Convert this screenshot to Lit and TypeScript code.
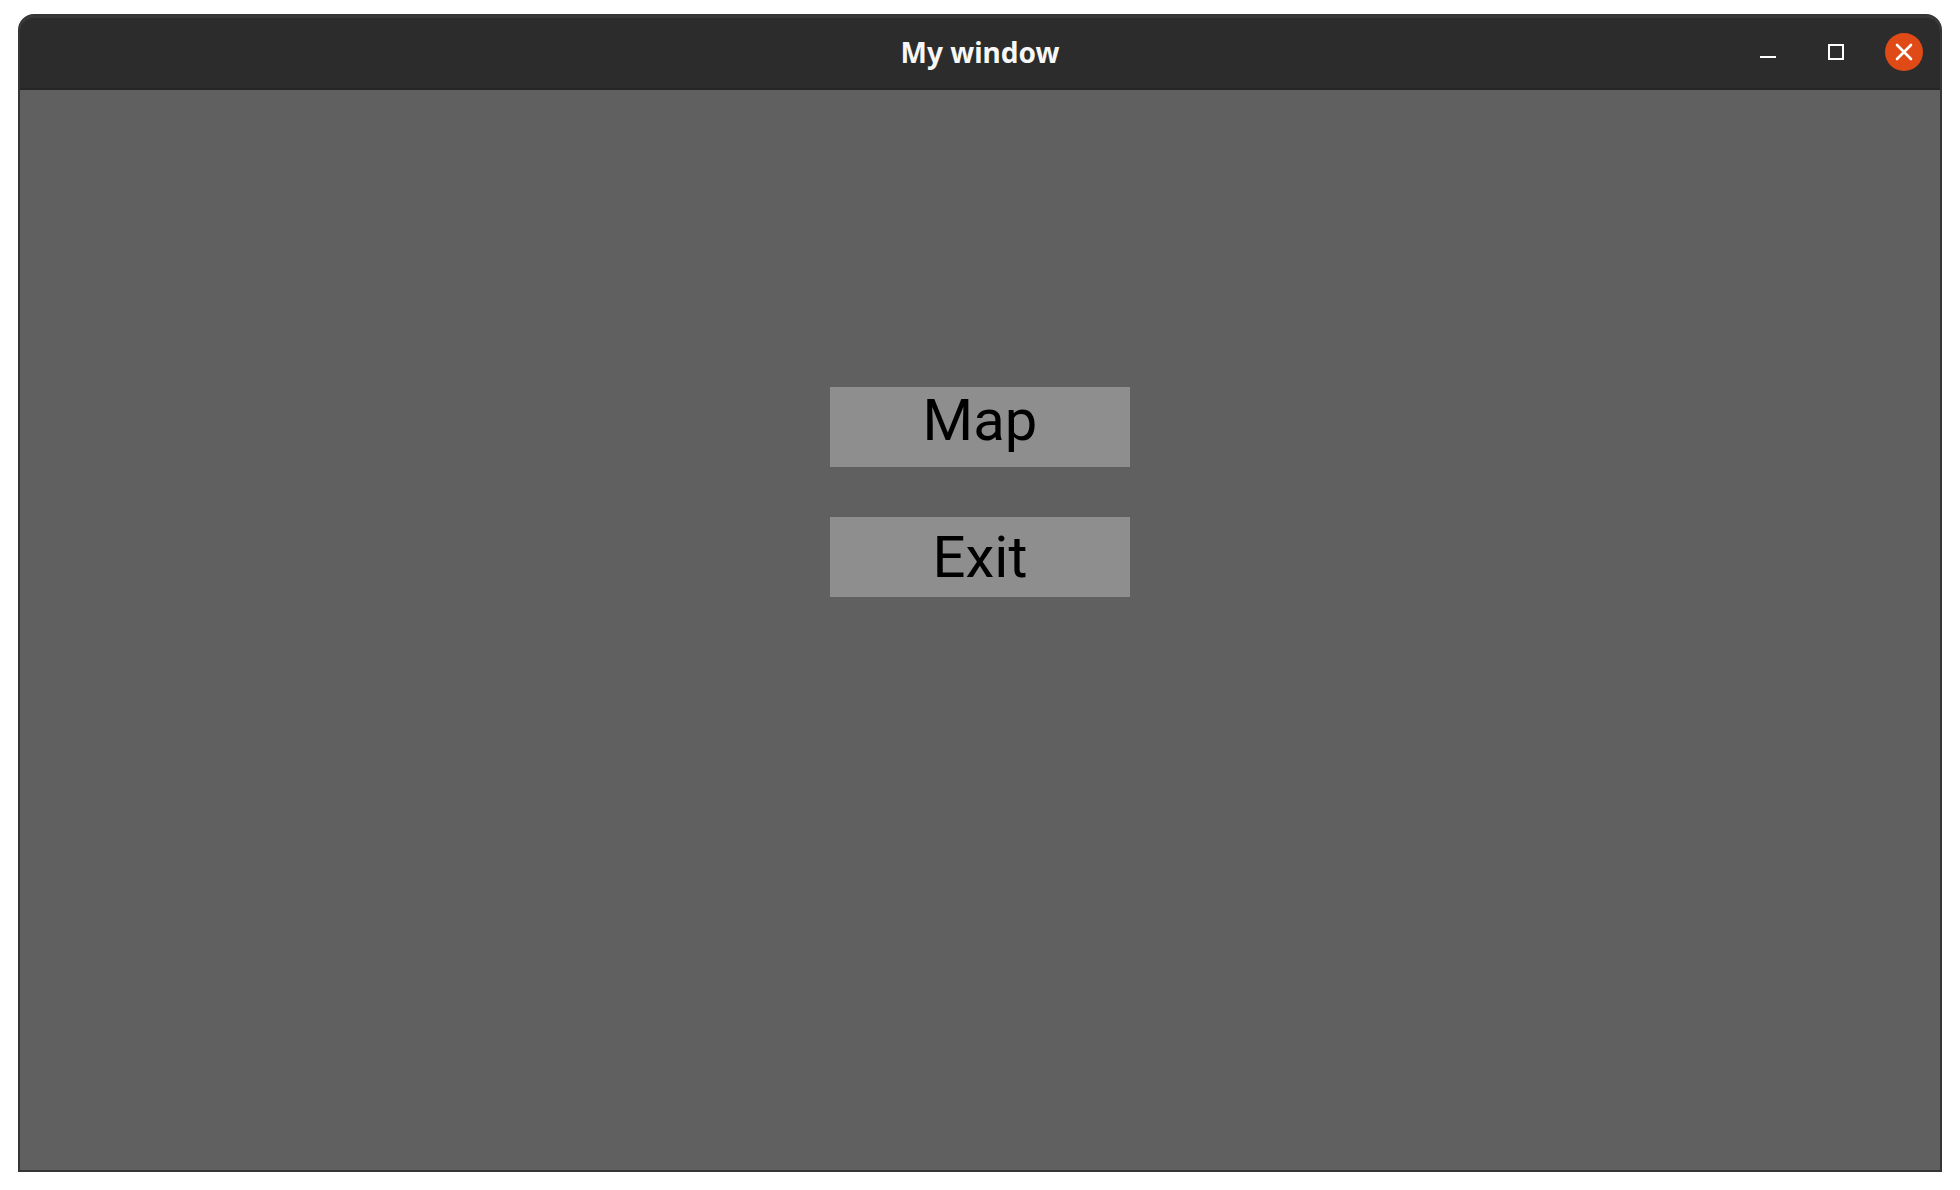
import { LitElement, html, css } from "lit";
import { customElement } from "lit/decorators.js";

@customElement("app-root")
export class AppRoot extends LitElement {
  static styles = css`
    :host {
      display: block;
      background: #ffffff;
    }
    .desktop {
      box-sizing: border-box;
      display: flex;
      min-height: 100vh;
      padding: 14px 18px 18px;
    }
    .window {
      flex: 1;
      display: flex;
      flex-direction: column;
      border: 2px solid #353535;
      border-radius: 16px 16px 0 0;
      background: #606060;
      overflow: hidden;
    }
    .titlebar {
      box-sizing: border-box;
      display: grid;
      grid-template-columns: 1fr auto 1fr;
      align-items: center;
      height: 74px;
      padding: 0 17px;
      border-bottom: 2px solid #262626;
      border-radius: 14px 14px 0 0;
      background: #2c2c2c;
      box-shadow: inset 0 2px #383838;
    }
    .title {
      grid-column: 2;
      margin: 0;
      color: #f7f7f7;
      font: 700 28px/40px "Noto Sans", "Open Sans", sans-serif;
    }
    .controls {
      display: flex;
      justify-content: flex-end;
      gap: 30px;
    }
    .control {
      width: 38px;
      height: 38px;
      padding: 0;
      border: 0;
      border-radius: 50%;
      background: transparent;
      color: #ffffff;
    }
    .control.close {
      background: #e04a16;
    }
    .control svg {
      display: block;
      fill: none;
      stroke: currentColor;
    }
    .menu {
      flex: 1;
      display: flex;
      flex-direction: column;
      align-items: center;
      gap: 50px;
      padding-top: 297px;
    }
    .item {
      box-sizing: border-box;
      width: 300px;
      height: 80px;
      padding: 0;
      border: 0;
      background: #8e8e8e;
      color: #000000;
      font: 400 58px/64px Roboto, sans-serif;
    }
    .item.descends {
      padding-bottom: 14px;
    }
  `;

  render() {
    return html`
      <div class="desktop">
        <div class="window">
          <header class="titlebar">
            <h1 class="title">My window</h1>
            <div class="controls">
              <button class="control" aria-label="Minimize">
                <svg width="38" height="38" viewBox="0 0 38 38" stroke-width="2">
                  <path d="M11 24H27" />
                </svg>
              </button>
              <button class="control" aria-label="Maximize">
                <svg width="38" height="38" viewBox="0 0 38 38" stroke-width="2">
                  <rect x="12" y="12" width="14" height="14" />
                </svg>
              </button>
              <button class="control close" aria-label="Close">
                <svg width="38" height="38" viewBox="0 0 38 38" stroke-width="2.6">
                  <path d="M12 12L26 26M26 12L12 26" stroke-linecap="round" />
                </svg>
              </button>
            </div>
          </header>
          <main class="menu">
            <button class="item descends">Map</button>
            <button class="item">Exit</button>
          </main>
        </div>
      </div>
    `;
  }
}
